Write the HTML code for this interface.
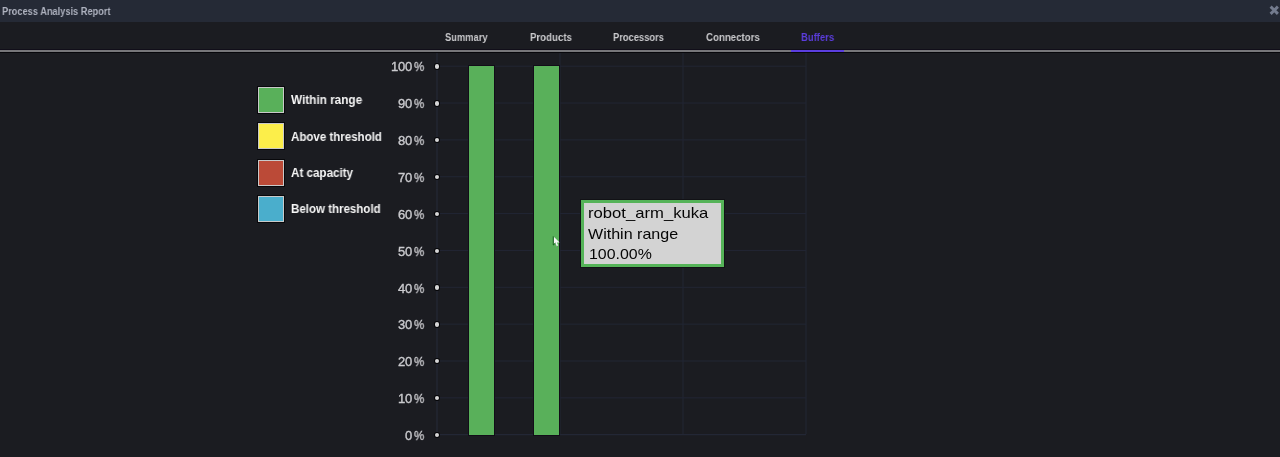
<!DOCTYPE html>
<html><head><meta charset="utf-8"><style>
html,body{margin:0;padding:0;width:1280px;height:457px;overflow:hidden;background:#1b1c21;font-family:"Liberation Sans",sans-serif;}
.t{position:absolute;white-space:nowrap;transform-origin:0 0;line-height:1;will-change:transform;}
#hdr{position:absolute;left:0;top:0;width:1280px;height:22px;background:#252a36;}
#tabline{position:absolute;left:0;top:50px;width:1280px;height:2px;background:#77777a;}
#tabshadow{position:absolute;left:0;top:49px;width:1280px;height:4px;background:#07070b;border-top:0;}
#tabshadow2{position:absolute;left:0;top:49px;width:1280px;height:1px;background:#110e19;}
#tabsel{position:absolute;left:791px;top:50px;width:53px;height:2px;background:#5b3ee0;}
.sq{position:absolute;left:258px;width:24px;height:24px;border:1px solid #c9c9c9;box-shadow:0 0 0 1px #08080b;}
.dot{position:absolute;left:434.7px;width:4.4px;height:4.4px;border-radius:50%;background:#d6d6d6;box-shadow:0 0 0 1px #060608;}
.bar{position:absolute;top:66px;width:25px;height:369px;background:#59b05a;box-shadow:0 0 0 1px #120d18;}
#tip{position:absolute;left:581px;top:200px;width:137px;height:61px;border:3px solid #55b358;background:#d3d3d3;box-shadow:0 0 0 1px #121216;}
</style></head><body>
<div id="hdr"></div>
<div class="t" style="left:2px;top:6px;font-size:11px;font-weight:700;color:#aeb2bf;transform:scaleX(0.84);">Process Analysis Report</div>
<svg style="position:absolute;left:1269px;top:5px" width="11" height="11" viewBox="0 0 11 11"><path d="M1.6 1.6 L8.9 8.9 M8.9 1.6 L1.6 8.9" stroke="#737b8e" stroke-width="2.9" stroke-linecap="butt"/></svg>
<div class="t" style="left:445px;top:32px;font-size:11px;font-weight:700;color:#c9c9cc;transform:scaleX(0.85);">Summary</div>
<div class="t" style="left:530px;top:32px;font-size:11px;font-weight:700;color:#c9c9cc;transform:scaleX(0.88);">Products</div>
<div class="t" style="left:613px;top:32px;font-size:11px;font-weight:700;color:#c9c9cc;transform:scaleX(0.85);">Processors</div>
<div class="t" style="left:706px;top:32px;font-size:11px;font-weight:700;color:#c9c9cc;transform:scaleX(0.88);">Connectors</div>
<div class="t" style="left:801.3px;top:32px;font-size:11px;font-weight:700;color:#5b3ddc;transform:scaleX(0.86);">Buffers</div>
<div id="tabshadow"></div><div id="tabshadow2"></div><div id="tabline"></div><div id="tabsel"></div>
<div class="sq" style="top:87px;background:#59b05a"></div>
<div class="sq" style="top:123px;background:#fcee4a"></div>
<div class="sq" style="top:160px;background:#bb4a37"></div>
<div class="sq" style="top:196px;background:#4aaecc"></div>
<div class="t" style="left:291px;top:94px;font-size:12px;font-weight:700;color:#f6f6f6;transform:scaleX(0.98);">Within range</div>
<div class="t" style="left:291px;top:130.5px;font-size:12px;font-weight:700;color:#f6f6f6;transform:scaleX(0.96);">Above threshold</div>
<div class="t" style="left:291px;top:167px;font-size:12px;font-weight:700;color:#f6f6f6;transform:scaleX(0.97);">At capacity</div>
<div class="t" style="left:291px;top:203px;font-size:12px;font-weight:700;color:#f6f6f6;transform:scaleX(0.96);">Below threshold</div>
<svg style="position:absolute;left:0;top:0" width="1280" height="457"><g stroke="#222634" stroke-width="1"><line x1="437" y1="53" x2="437" y2="434" stroke="#262b3b"/><line x1="560" y1="53" x2="560" y2="434" stroke="#222634"/><line x1="683" y1="53" x2="683" y2="434" stroke="#222634"/><line x1="806" y1="53" x2="806" y2="434" stroke="#222634"/><line x1="437" y1="66.2" x2="806" y2="66.2" stroke="#222634"/><line x1="437" y1="103.05" x2="806" y2="103.05" stroke="#222634"/><line x1="437" y1="139.9" x2="806" y2="139.9" stroke="#222634"/><line x1="437" y1="176.75" x2="806" y2="176.75" stroke="#222634"/><line x1="437" y1="213.6" x2="806" y2="213.6" stroke="#222634"/><line x1="437" y1="250.45" x2="806" y2="250.45" stroke="#222634"/><line x1="437" y1="287.3" x2="806" y2="287.3" stroke="#222634"/><line x1="437" y1="324.15" x2="806" y2="324.15" stroke="#222634"/><line x1="437" y1="361.0" x2="806" y2="361.0" stroke="#222634"/><line x1="437" y1="397.85" x2="806" y2="397.85" stroke="#222634"/><line x1="437" y1="434.7" x2="806" y2="434.7" stroke="#262b3b"/></g></svg>
<div class="t" style="top:60.4px;right:868px;font-size:13px;font-weight:400;color:#cbcbcf;letter-spacing:-0.2px;-webkit-text-stroke:0.35px #cbcbcf;">100</div>
<div class="t" style="top:60.4px;left:414px;font-size:13px;font-weight:400;color:#cbcbcf;transform:scaleX(0.88);-webkit-text-stroke:0.35px #cbcbcf;">%</div>
<div class="t" style="top:97.25px;right:868px;font-size:13px;font-weight:400;color:#cbcbcf;letter-spacing:-0.2px;-webkit-text-stroke:0.35px #cbcbcf;">90</div>
<div class="t" style="top:97.25px;left:414px;font-size:13px;font-weight:400;color:#cbcbcf;transform:scaleX(0.88);-webkit-text-stroke:0.35px #cbcbcf;">%</div>
<div class="t" style="top:134.1px;right:868px;font-size:13px;font-weight:400;color:#cbcbcf;letter-spacing:-0.2px;-webkit-text-stroke:0.35px #cbcbcf;">80</div>
<div class="t" style="top:134.1px;left:414px;font-size:13px;font-weight:400;color:#cbcbcf;transform:scaleX(0.88);-webkit-text-stroke:0.35px #cbcbcf;">%</div>
<div class="t" style="top:170.95px;right:868px;font-size:13px;font-weight:400;color:#cbcbcf;letter-spacing:-0.2px;-webkit-text-stroke:0.35px #cbcbcf;">70</div>
<div class="t" style="top:170.95px;left:414px;font-size:13px;font-weight:400;color:#cbcbcf;transform:scaleX(0.88);-webkit-text-stroke:0.35px #cbcbcf;">%</div>
<div class="t" style="top:207.8px;right:868px;font-size:13px;font-weight:400;color:#cbcbcf;letter-spacing:-0.2px;-webkit-text-stroke:0.35px #cbcbcf;">60</div>
<div class="t" style="top:207.8px;left:414px;font-size:13px;font-weight:400;color:#cbcbcf;transform:scaleX(0.88);-webkit-text-stroke:0.35px #cbcbcf;">%</div>
<div class="t" style="top:244.65px;right:868px;font-size:13px;font-weight:400;color:#cbcbcf;letter-spacing:-0.2px;-webkit-text-stroke:0.35px #cbcbcf;">50</div>
<div class="t" style="top:244.65px;left:414px;font-size:13px;font-weight:400;color:#cbcbcf;transform:scaleX(0.88);-webkit-text-stroke:0.35px #cbcbcf;">%</div>
<div class="t" style="top:281.5px;right:868px;font-size:13px;font-weight:400;color:#cbcbcf;letter-spacing:-0.2px;-webkit-text-stroke:0.35px #cbcbcf;">40</div>
<div class="t" style="top:281.5px;left:414px;font-size:13px;font-weight:400;color:#cbcbcf;transform:scaleX(0.88);-webkit-text-stroke:0.35px #cbcbcf;">%</div>
<div class="t" style="top:318.35px;right:868px;font-size:13px;font-weight:400;color:#cbcbcf;letter-spacing:-0.2px;-webkit-text-stroke:0.35px #cbcbcf;">30</div>
<div class="t" style="top:318.35px;left:414px;font-size:13px;font-weight:400;color:#cbcbcf;transform:scaleX(0.88);-webkit-text-stroke:0.35px #cbcbcf;">%</div>
<div class="t" style="top:355.2px;right:868px;font-size:13px;font-weight:400;color:#cbcbcf;letter-spacing:-0.2px;-webkit-text-stroke:0.35px #cbcbcf;">20</div>
<div class="t" style="top:355.2px;left:414px;font-size:13px;font-weight:400;color:#cbcbcf;transform:scaleX(0.88);-webkit-text-stroke:0.35px #cbcbcf;">%</div>
<div class="t" style="top:392.05px;right:868px;font-size:13px;font-weight:400;color:#cbcbcf;letter-spacing:-0.2px;-webkit-text-stroke:0.35px #cbcbcf;">10</div>
<div class="t" style="top:392.05px;left:414px;font-size:13px;font-weight:400;color:#cbcbcf;transform:scaleX(0.88);-webkit-text-stroke:0.35px #cbcbcf;">%</div>
<div class="t" style="top:428.9px;right:868px;font-size:13px;font-weight:400;color:#cbcbcf;letter-spacing:-0.2px;-webkit-text-stroke:0.35px #cbcbcf;">0</div>
<div class="t" style="top:428.9px;left:414px;font-size:13px;font-weight:400;color:#cbcbcf;transform:scaleX(0.88);-webkit-text-stroke:0.35px #cbcbcf;">%</div>
<div class="dot" style="top:64.3px"></div>
<div class="dot" style="top:101.15px"></div>
<div class="dot" style="top:138.0px"></div>
<div class="dot" style="top:174.85px"></div>
<div class="dot" style="top:211.7px"></div>
<div class="dot" style="top:248.55px"></div>
<div class="dot" style="top:285.4px"></div>
<div class="dot" style="top:322.25px"></div>
<div class="dot" style="top:359.1px"></div>
<div class="dot" style="top:395.95px"></div>
<div class="dot" style="top:432.8px"></div>
<div class="bar" style="left:469px"></div><div class="bar" style="left:534px"></div>
<div id="tip"><div class="t" style="left:4px;top:2px;font-size:15px;font-weight:400;color:#050505;transform:scaleX(1.11);">robot_arm_kuka</div><div class="t" style="left:4px;top:23.3px;font-size:15px;font-weight:400;color:#050505;transform:scaleX(1.07);">Within range</div><div class="t" style="left:5px;top:43px;font-size:15px;font-weight:400;color:#050505;transform:scaleX(1.06);">100.00%</div></div>
<svg style="position:absolute;left:552px;top:235px" width="10" height="13" viewBox="0 0 10 13"><path d="M1.3 1.3 L1.3 10 L3.4 8.1 L4.9 11.4 L6.3 10.8 L4.8 7.6 L7.6 7.6 Z" fill="#f6f6f6"/><path d="M1.3 1.3 L1.3 10 L3.4 8.1" fill="none" stroke="#0b5a12" stroke-width="1"/><path d="M4.9 11.4 L6.3 10.8" fill="none" stroke="#3a6a3a" stroke-width="0.6"/></svg>
</body></html>
